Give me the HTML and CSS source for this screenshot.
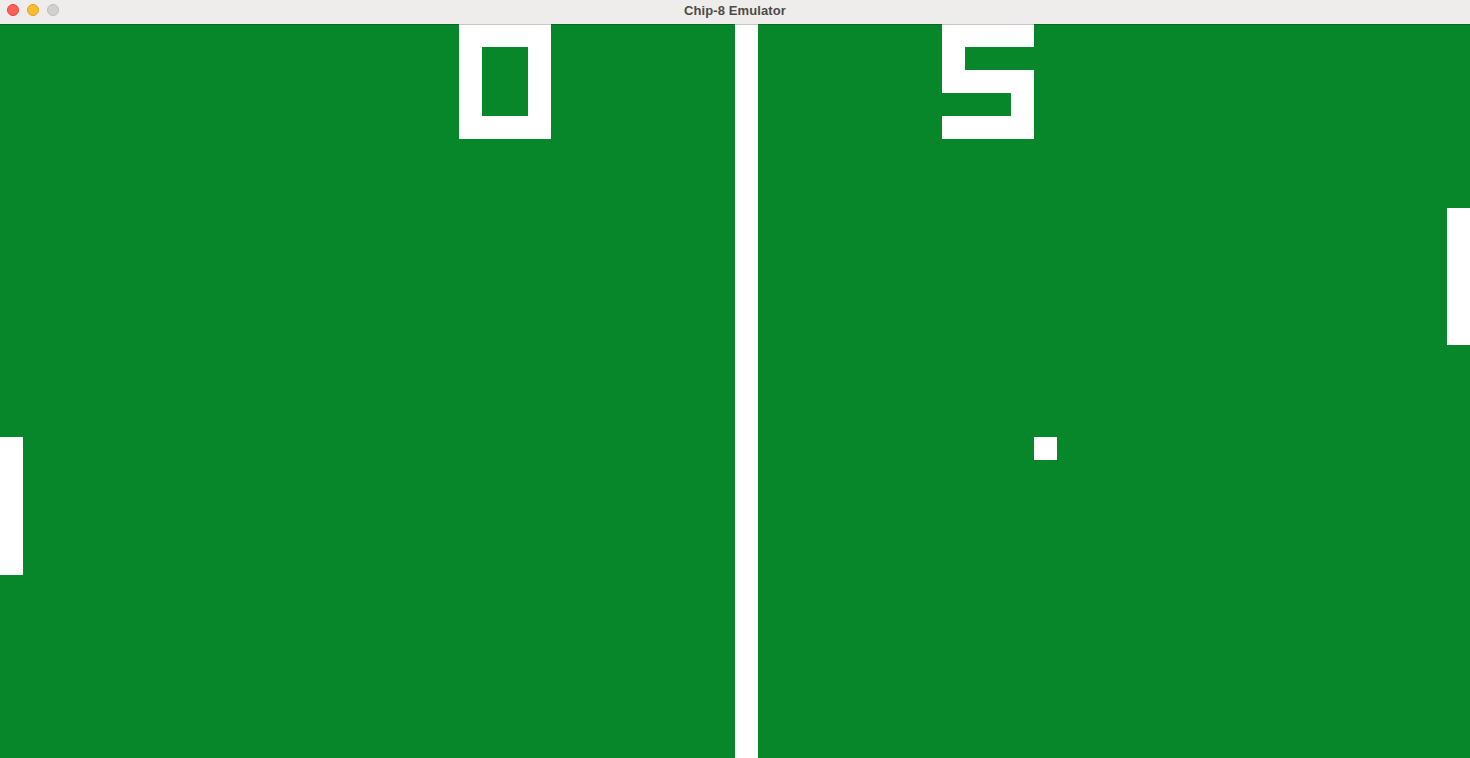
FILE: index.html
```html
<!DOCTYPE html>
<html>
<head>
<meta charset="utf-8">
<title>Chip-8 Emulator</title>
<link rel="stylesheet" href="styles.css">
</head>
<body>
<div class="window">
  <div class="titlebar">
    <div class="lights">
      <span class="light red"></span>
      <span class="light yellow"></span>
      <span class="light gray"></span>
    </div>
    <div class="title">Chip-8 Emulator</div>
  </div>
  <div class="screen">
    <!-- center net -->
    <div class="px net" style="grid-column: 33; grid-row: 1 / 33;"></div>
    <!-- score 0 -->
    <div class="px" style="grid-column: 21 / 25; grid-row: 1;"></div>
    <div class="px" style="grid-column: 21; grid-row: 2 / 5;"></div>
    <div class="px" style="grid-column: 24; grid-row: 2 / 5;"></div>
    <div class="px" style="grid-column: 21 / 25; grid-row: 5;"></div>
    <!-- score 5 -->
    <div class="px" style="grid-column: 42 / 46; grid-row: 1;"></div>
    <div class="px" style="grid-column: 42; grid-row: 2;"></div>
    <div class="px" style="grid-column: 42 / 46; grid-row: 3;"></div>
    <div class="px" style="grid-column: 45; grid-row: 4;"></div>
    <div class="px" style="grid-column: 42 / 46; grid-row: 5;"></div>
    <!-- paddles -->
    <div class="px" style="grid-column: 1; grid-row: 19 / 25;"></div>
    <div class="px" style="grid-column: 64; grid-row: 9 / 15;"></div>
    <!-- ball -->
    <div class="px" style="grid-column: 46; grid-row: 19;"></div>
  </div>
</div>
</body>
</html>
```
FILE: styles.css
```css
html, body {
  margin: 0;
  padding: 0;
  width: 1470px;
  height: 758px;
  overflow: hidden;
  background: #ffffff;
}
.window {
  display: flex;
  flex-direction: column;
  width: 1470px;
  height: 758px;
}
.titlebar {
  position: relative;
  height: 24px;
  flex: 0 0 24px;
  background: #efedeb;
  display: flex;
  align-items: center;
  justify-content: center;
}
.titlebar::after {
  content: "";
  position: absolute;
  left: 0;
  right: 0;
  top: 24px;
  height: 1px;
  background: rgba(0, 0, 0, 0.22);
  z-index: 2;
}
.lights {
  position: absolute;
  left: 7px;
  top: 4px;
  display: flex;
  gap: 8px;
}
.light {
  width: 12px;
  height: 12px;
  border-radius: 50%;
  box-sizing: border-box;
}
.red { background: #fe5f57; border: 0.5px solid #e0443e; }
.yellow { background: #febc2e; border: 0.5px solid #dea123; }
.gray { background: #d1d0ce; border: 0.5px solid #bebdbb; }
.title {
  font-family: "Liberation Sans", Arial, sans-serif;
  font-weight: bold;
  font-size: 13px;
  color: #4c4a48;
  margin-top: -4px;
  letter-spacing: 0.1px;
}
.screen {
  flex: 1 1 auto;
  background: #07872a;
  display: grid;
  grid-template-columns: repeat(64, 1fr);
  grid-template-rows: repeat(32, 1fr);
}
.px {
  background: #ffffff;
}
```
